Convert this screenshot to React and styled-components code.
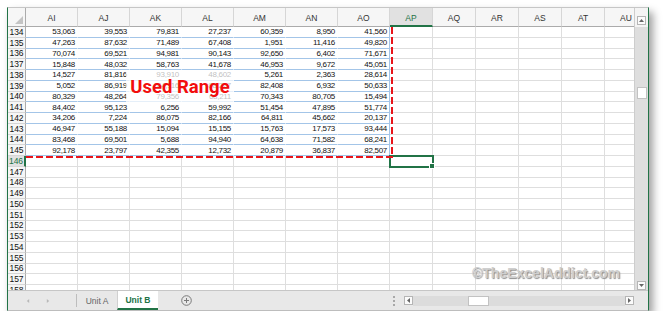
import React from 'react';
import styled, { createGlobalStyle, css } from 'styled-components';

const GREEN = '#217346';

const GlobalStyle = createGlobalStyle`
  html, body {
    margin: 0;
    padding: 0;
    background: #fff;
  }
  body {
    font-family: "Liberation Sans", Arial, sans-serif;
  }
`;

const columns = ['AI', 'AJ', 'AK', 'AL', 'AM', 'AN', 'AO', 'AP', 'AQ', 'AR', 'AS', 'AT', 'AU'];
const WIDE_COLS = 7;
const FIRST_ROW = 134;
const ROW_COUNT = 25;

const data = [
    ['53,063', '39,553', '79,831', '27,237', '60,359', '8,950', '41,560'],
    ['47,263', '87,632', '71,489', '67,408', '1,951', '11,416', '49,820'],
    ['70,074', '69,521', '94,981', '90,143', '92,650', '6,402', '71,671'],
    ['15,848', '48,032', '58,763', '41,678', '46,953', '9,672', '45,051'],
    ['14,527', '81,816', '93,910', '48,602', '5,261', '2,363', '28,614'],
    ['5,052', '86,919', '44,116', '88,227', '82,408', '6,932', '50,633'],
    ['80,329', '48,264', '79,356', '68,211', '70,343', '80,705', '15,494'],
    ['84,402', '95,123', '6,256', '59,992', '51,454', '47,895', '51,774'],
    ['34,206', '7,224', '86,075', '82,166', '64,811', '45,662', '20,137'],
    ['46,947', '55,188', '15,094', '15,155', '15,763', '17,573', '93,444'],
    ['83,468', '69,501', '5,688', '94,940', '64,638', '71,582', '68,241'],
    ['92,178', '23,797', '42,355', '12,732', '20,879', '36,837', '82,507'],
];

const Window = styled.div`
    margin: 7px 0 0 7px;
    width: 642px;
    box-sizing: border-box;
    border-top: 1px solid #c6c6c6;
    border-bottom: 1px solid #bdbdbd;
    border-left: 1px solid ${GREEN};
    border-right: 1px solid ${GREEN};
    box-shadow: 4px 5px 8px rgba(0, 0, 0, 0.38);
    display: flex;
    flex-direction: column;
    background: #fff;
`;

const Main = styled.div`
    display: flex;
    height: 282px;
`;

const Viewport = styled.div`
    position: relative;
    width: 626px;
    overflow: hidden;
`;

const Sheet = styled.div`
    display: grid;
    grid-template-columns: 18px repeat(7, 52px) repeat(6, 43px);
    grid-template-rows: 19px repeat(${ROW_COUNT}, 10.75px);
    width: max-content;
`;

const Corner = styled.div`
    position: relative;
    background: #f6f6f6;
    border-right: 1px solid #ababab;
    border-bottom: 1px solid #ababab;
    box-sizing: border-box;
    &::after {
        content: '';
        position: absolute;
        right: 2px;
        bottom: 2px;
        width: 8px;
        height: 8px;
        background: #c4c4c4;
        clip-path: polygon(100% 0, 100% 100%, 0 100%);
    }
`;

const ColHead = styled.div`
    display: flex;
    align-items: center;
    justify-content: center;
    box-sizing: border-box;
    background: #f6f6f6;
    border-right: 1px solid #d6d6d6;
    border-bottom: 1px solid #ababab;
    font-size: 8.5px;
    color: #333;
    padding-top: 2px;
    ${({ $active }) => $active && css`
        background: #e1e1e1;
        color: ${GREEN};
        border-bottom: 2px solid ${GREEN};
    `}
`;

const RowHead = styled.div`
    display: flex;
    align-items: center;
    justify-content: center;
    box-sizing: border-box;
    background: #f6f6f6;
    border-right: 1px solid #ababab;
    border-bottom: 1px solid #d6d6d6;
    font-size: 8.5px;
    color: #111;
    ${({ $active }) => $active && css`
        background: #e1e1e1;
        color: ${GREEN};
        border-right: 2px solid ${GREEN};
    `}
`;

const Cell = styled.div`
    position: relative;
    display: flex;
    align-items: center;
    justify-content: flex-end;
    box-sizing: border-box;
    padding-right: 2px;
    font-size: 8px;
    letter-spacing: -0.3px;
    color: #111;
    border-right: 1px solid #dedede;
    border-bottom: 1px solid #dedede;
    ${({ $data }) => $data && css`
        border-right-color: #fff;
        border-bottom-color: #a3c5e8;
    `}
    ${({ $edge }) => $edge && css`
        border-right-color: #a3c5e8;
    `}
    ${({ $selected }) => $selected && css`
        outline: 2px solid ${GREEN};
        outline-offset: -1px;
        z-index: 2;
        &::after {
            content: '';
            position: absolute;
            right: -3px;
            bottom: -3px;
            width: 4px;
            height: 4px;
            background: ${GREEN};
            border: 1px solid #fff;
        }
    `}
`;

const DashV = styled.div`
    position: absolute;
    left: 383px;
    top: 19px;
    width: 2px;
    height: 131px;
    background: repeating-linear-gradient(to bottom, #e8141a 0 7px, transparent 7px 10px);
    z-index: 3;
`;

const DashH = styled.div`
    position: absolute;
    left: 18px;
    top: 148px;
    width: 367px;
    height: 2px;
    background: repeating-linear-gradient(to right, #e8141a 0 7px, transparent 7px 10px);
    z-index: 3;
`;

const RangeLabel = styled.div`
    position: absolute;
    left: 118px;
    top: 64px;
    width: 108px;
    height: 30px;
    display: flex;
    align-items: center;
    justify-content: center;
    background: rgba(255, 255, 255, 0.72);
    color: #f20d0d;
    font-family: Roboto, "Liberation Sans", sans-serif;
    font-weight: 700;
    font-size: 18.5px;
    z-index: 4;
`;

const Watermark = styled.div`
    position: absolute;
    left: 464px;
    top: 258px;
    font-size: 14px;
    line-height: 14px;
    font-weight: 700;
    color: #cfcfcf;
    text-shadow: 1px 1px 1px #8d8d8d;
    white-space: nowrap;
    z-index: 4;
`;

const VScroll = styled.div`
    flex: 1;
    display: flex;
    flex-direction: column;
    align-items: center;
    background: #dedede;
    border-left: 1px solid #cdcdcd;
`;

const VScrollHead = styled.div`
    align-self: stretch;
    height: 19px;
    box-sizing: border-box;
    background: #f4f4f4;
    display: flex;
    align-items: flex-end;
    justify-content: center;
    padding-bottom: 2px;
`;

const VTrack = styled.div`
    flex: 1;
`;

const VThumb = styled.div`
    width: 10px;
    height: 12px;
    margin-top: 60px;
    box-sizing: border-box;
    background: #fff;
    border: 1px solid #c2c2c2;
`;

const ArrowButton = styled.div`
    width: 9px;
    height: 9px;
    box-sizing: border-box;
    background: #fbfbfb;
    border: 1px solid #b5b5b5;
    display: flex;
    align-items: center;
    justify-content: center;
    flex-shrink: 0;
    svg {
        display: block;
    }
`;

const SheetBar = styled.div`
    height: 20px;
    box-sizing: border-box;
    border-top: 1px solid #c6c6c6;
    background: #e8e8e8;
    display: flex;
    align-items: stretch;
`;

const Tabs = styled.div`
    width: 383px;
    display: flex;
    align-items: stretch;
`;

const Nav = styled.div`
    width: 68px;
    display: flex;
    align-items: center;
    gap: 16px;
    padding-left: 18px;
    box-sizing: border-box;
`;

const Divider = styled.div`
    width: 1px;
    background: #bdbdbd;
    margin: 3px 0 3px;
`;

const Tab = styled.div`
    width: ${({ $active }) => ($active ? 41 : 40)}px;
    display: flex;
    align-items: center;
    justify-content: center;
    box-sizing: border-box;
    font-size: 8.5px;
    color: #666;
    ${({ $active }) => $active && css`
        background: #fff;
        color: ${GREEN};
        font-weight: 700;
        border-bottom: 2px solid ${GREEN};
        border-left: 1px solid #d0d0d0;
        padding-top: 1px;
    `}
`;

const AddSheet = styled.div`
    display: flex;
    align-items: center;
    margin-left: 23px;
`;

const Splitter = styled.div`
    width: 6px;
    display: flex;
    flex-direction: column;
    align-items: center;
    justify-content: center;
    gap: 2px;
    span {
        width: 2px;
        height: 2px;
        background: #a8a8a8;
    }
`;

const HScroll = styled.div`
    margin-left: 7px;
    width: 230px;
    display: flex;
    align-items: center;
`;

const HTrack = styled.div`
    flex: 1;
    height: 10px;
    background: #dcdcdc;
    display: flex;
    align-items: center;
`;

const HThumb = styled.div`
    margin-left: 55px;
    width: 21px;
    height: 10px;
    box-sizing: border-box;
    background: #fff;
    border: 1px solid #c2c2c2;
`;

const Tri = ({ dir, color = '#666', size = 5 }) => {
    const pts = {
        up: '0,4 2.5,1 5,4',
        down: '0,1 2.5,4 5,1',
        left: '4,0 1,2.5 4,5',
        right: '1,0 4,2.5 1,5',
    }[dir];
    return (
        <svg width={size} height={size} viewBox="0 0 5 5">
            <polygon points={pts} fill={color} />
        </svg>
    );
};

const PlusCircle = () => (
    <svg width="11" height="11" viewBox="0 0 11 11">
        <circle cx="5.5" cy="5.5" r="4.8" fill="none" stroke="#7a7a7a" strokeWidth="1" />
        <path d="M5.5 3v5M3 5.5h5" stroke="#7a7a7a" strokeWidth="1" />
    </svg>
);

const App = () => {
    const rows = Array.from({ length: ROW_COUNT }, (_, i) => FIRST_ROW + i);
    return (
        <>
            <GlobalStyle />
            <Window>
                <Main>
                    <Viewport>
                        <Sheet>
                            <Corner />
                            {columns.map((c) => (
                                <ColHead key={c} $active={c === 'AP'}>{c}</ColHead>
                            ))}
                            {rows.map((r) => {
                                const values = data[r - FIRST_ROW];
                                return (
                                    <React.Fragment key={r}>
                                        <RowHead $active={r === 146}>{r}</RowHead>
                                        {columns.map((c, ci) => {
                                            const isData = values && ci < WIDE_COLS;
                                            return (
                                                <Cell
                                                    key={c}
                                                    $data={isData}
                                                    $edge={isData && ci === WIDE_COLS - 1}
                                                    $selected={r === 146 && c === 'AP'}
                                                >
                                                    {isData ? values[ci] : null}
                                                </Cell>
                                            );
                                        })}
                                    </React.Fragment>
                                );
                            })}
                        </Sheet>
                        <DashV />
                        <DashH />
                        <RangeLabel>Used Range</RangeLabel>
                        <Watermark>©TheExcelAddict.com</Watermark>
                    </Viewport>
                    <VScroll>
                        <VScrollHead>
                            <ArrowButton><Tri dir="up" /></ArrowButton>
                        </VScrollHead>
                        <VTrack>
                            <VThumb />
                        </VTrack>
                        <ArrowButton><Tri dir="down" /></ArrowButton>
                    </VScroll>
                </Main>
                <SheetBar>
                    <Tabs>
                        <Nav>
                            <Tri dir="left" color="#b8b8b8" size={4} />
                            <Tri dir="right" color="#b8b8b8" size={4} />
                        </Nav>
                        <Divider />
                        <Tab>Unit A</Tab>
                        <Tab $active>Unit B</Tab>
                        <AddSheet><PlusCircle /></AddSheet>
                    </Tabs>
                    <Splitter>
                        <span /><span /><span />
                    </Splitter>
                    <HScroll>
                        <ArrowButton><Tri dir="left" /></ArrowButton>
                        <HTrack>
                            <HThumb />
                        </HTrack>
                        <ArrowButton><Tri dir="right" /></ArrowButton>
                    </HScroll>
                </SheetBar>
            </Window>
        </>
    );
};

export default App;
